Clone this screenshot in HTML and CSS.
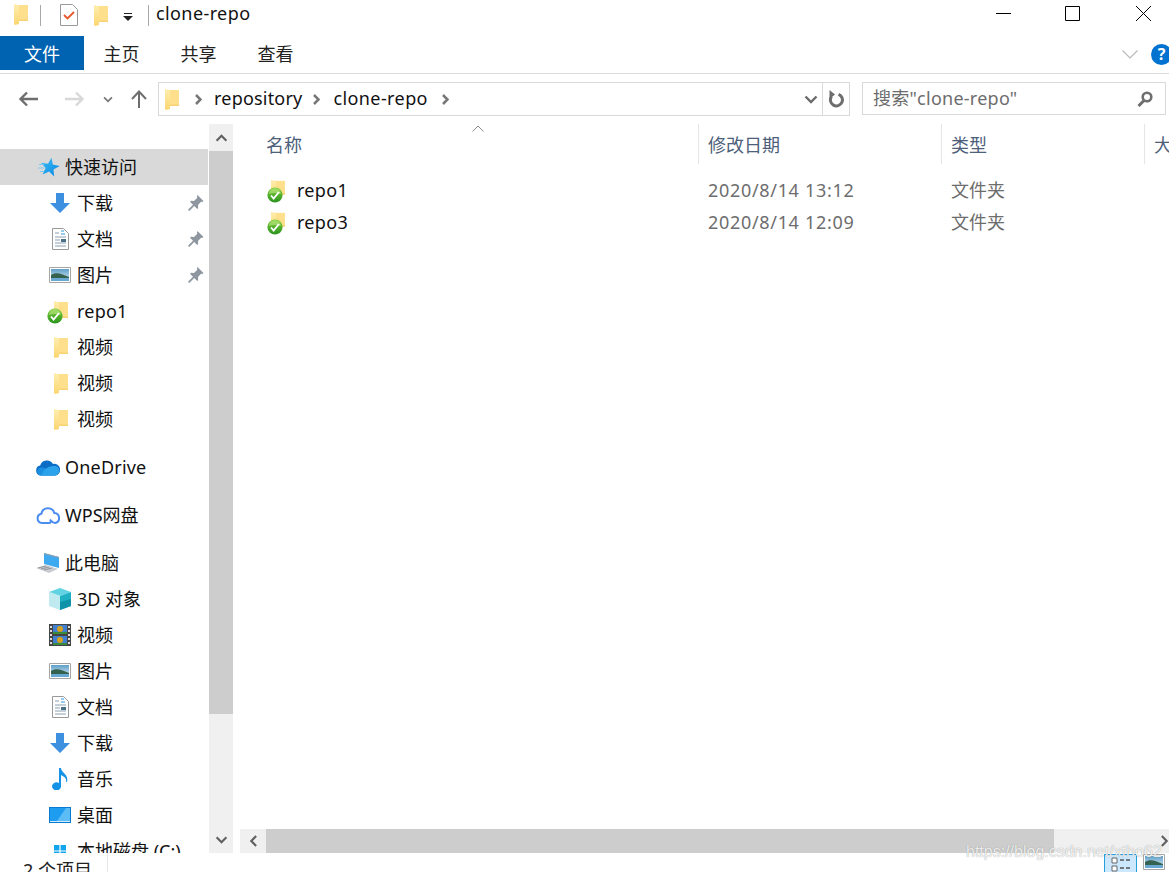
FILE: index.html
```html
<!DOCTYPE html>
<html lang="zh-CN">
<head>
<meta charset="utf-8">
<title>clone-repo</title>
<link rel="stylesheet" href="styles.css">
</head>
<body>
<svg class="defs" width="0" height="0" aria-hidden="true">
  <defs>
    <linearGradient id="fy" x1="0" y1="0" x2="0" y2="1"><stop offset="0" stop-color="#ffeeb0"/><stop offset="1" stop-color="#fbd670"/></linearGradient>
    <linearGradient id="gb" x1="0" y1="0" x2="0" y2="1"><stop offset="0" stop-color="#7ccb34"/><stop offset="1" stop-color="#2a9420"/></linearGradient>
    <linearGradient id="sky" x1="0" y1="0" x2="1" y2="1"><stop offset="0" stop-color="#3cc0f8"/><stop offset="1" stop-color="#0a84e0"/></linearGradient>
    <linearGradient id="picsky" x1="0" y1="0" x2="0" y2="1"><stop offset="0" stop-color="#5f9fc8"/><stop offset="1" stop-color="#dfeef6"/></linearGradient>
    <symbol id="folder" viewBox="0 0 14 21" preserveAspectRatio="none"><path d="M4 1h10v16H4z" fill="#fddf8c"/><path d="M0 0l5 1v19l-4 1H1L0 20z" fill="url(#fy)"/><path d="M5 15.500h9V17H5z" fill="#f7d274"/></symbol>
    <symbol id="badge" viewBox="0 0 16 16"><circle cx="8" cy="8" r="7.600" fill="url(#gb)"/><path d="M2 7a6 6 0 0 1 12 0a14 9 0 0 0-12 0z" fill="#b4e27e" opacity=".7"/><path d="M4 8.500l2.600 3L12 5" fill="none" stroke="#fff" stroke-width="1.900"/></symbol>
    <symbol id="pin" viewBox="0 0 16 16"><path d="M9.500 0l6 6-1.400 1-1-.3L10 10l.2 3-1 .9-3-3L1.300 16 0 14.700l5-4.900-3-3 1-1 3 .2 3.300-3.200-.4-1z" fill="#8e979f"/></symbol>
    <symbol id="down" viewBox="0 0 20 20"><path d="M6 0h8v10h6l-10 10L0 10h6z" fill="#3d8fe0"/></symbol>
    <symbol id="doc" viewBox="0 0 17 22"><path d="M.5.500h11l5 5v16H.500z" fill="#fff" stroke="#9a9a9a"/><path d="M3 5h4M3 9h11M3 12h5M3 15h11M3 18h11" stroke="#8aa0b5" stroke-width="1.200"/><path d="M9 3h3M9 6h4" stroke="#2f9ae0" stroke-width="1.200"/><path d="M9 11h5v3H9z" fill="#4a7088"/></symbol>
    <symbol id="pic" viewBox="0 0 22 16"><path d="M.5.500h21v15H.500z" fill="#fff" stroke="#a5a5a5"/><path d="M2 2h18v12H2z" fill="url(#picsky)"/><path d="M2 8c5-3 9-2 18 2v1H2z" fill="#35614f"/><path d="M2 11h18v3H2z" fill="#6aa8d4"/></symbol>
    <symbol id="cloud-fill" viewBox="0 0 24 16"><path d="M5 16a5 5 0 0 1-.8-9.900A7 7 0 0 1 17 4.500 5.500 5.500 0 0 1 19.500 16z" fill="#0a6cc4"/><path d="M5 16a4 4 0 0 1-1-7.800c4-.9 10 1.800 15 7.800z" fill="#1a8fe0"/><path d="M8 11c3-4 8-5 12-4.400 4 1.500 5 7 0 9.400H5z" fill="#2aa3ea"/></symbol>
    <symbol id="cloud-line" viewBox="0 0 24 18"><path d="M6 16.500a4.700 4.700 0 0 1-.6-9.300 6.700 6.700 0 0 1 13-.6 5 5 0 0 1 .6 9.900c-2 0-3-1-4-2.500" fill="none" stroke="#4a8cf0" stroke-width="2"/><path d="M6 16.500h7c1.500 0 2.500-2 1-3.500" fill="none" stroke="#4a8cf0" stroke-width="2"/></symbol>
    <symbol id="pc" viewBox="0 0 24 21"><path d="M8 0l15 4v11L8 11z" fill="#3fa9ef"/><path d="M8 0l15 4v1L8 1z" fill="#9a9fa6"/><path d="M0 15l10-3 12 4-9 4z" fill="#c9ccd0"/><path d="M2 15l8-2M5 16l8-2M8 17l8-2" stroke="#8f9499"/></symbol>
    <symbol id="cube" viewBox="0 0 22 22"><path d="M11 0l11 4-11 4L0 4z" fill="#62d3e3"/><path d="M0 4l11 4v14L0 18z" fill="#bfeaf0"/><path d="M22 4L11 8v14l11-4z" fill="#1fb0c4"/><path d="M11 14l11-3v7l-11 4z" fill="#0d92a8"/></symbol>
    <symbol id="film" viewBox="0 0 22 22"><path d="M0 0h22v22H0z" fill="#444"/><path d="M4 1h14v9H4z" fill="#3f7fd0"/><path d="M4 12h14v9H4z" fill="#3f7fd0"/><circle cx="11" cy="5" r="3" fill="#d6a11e"/><circle cx="11" cy="16" r="3" fill="#d6a11e"/><path d="M4 8h14v2H4zM4 19h14v2H4z" fill="#3b8a3a"/><path d="M1 2h2v2H1zM1 6h2v2H1zM1 10h2v2H1zM1 14h2v2H1zM1 18h2v2H1zM19 2h2v2h-2zM19 6h2v2h-2zM19 10h2v2h-2zM19 14h2v2h-2zM19 18h2v2h-2z" fill="#ddd"/></symbol>
    <symbol id="note" viewBox="0 0 17 22"><path d="M7 0h2c0 5 8 6 6 14h-1c1-3-1-5-5-7v11a4.500 4 0 1 1-2-3z" fill="#1492e6"/></symbol>
    <symbol id="desk" viewBox="0 0 22 16"><path d="M0 0h22v16H0z" fill="#0a7bd0"/><path d="M1 1h20v13H1z" fill="#1d9cf0"/><path d="M8 14l9-13h4v13z" fill="#5cbcf5"/><path d="M1 14.500h20" stroke="#cfe9fb"/></symbol>
    <symbol id="star" viewBox="0 0 24 21"><path d="M15.500.7L16.800 7.600 23.700 9.100 17.500 12.500 18.200 19.500 13.100 14.600 6.600 17.400 9.600 11.100 5 5.800 12 6.700z" fill="url(#sky)"/><path d="M3 7.500h5M2 11h6M4 14.500h4" stroke="#7cc8f5"/></symbol>
    <symbol id="chev" viewBox="0 0 14 9"><path d="M1.500 1.500L7 7l5.500-5.500" fill="none" stroke="currentColor" stroke-width="2.400"/></symbol>
    <symbol id="crumb" viewBox="0 0 7 11"><path d="M1 1l4.500 4.500L1 10" fill="none" stroke="#777" stroke-width="2.500"/></symbol>
  </defs>
</svg>

<div class="window">
  <header class="titlebar">
    <svg class="i-folder-q"><use href="#folder"/></svg>
    <span class="tb-sep tb-sep-a"></span>
    <svg class="i-check" viewBox="0 0 18 22"><path d="M.5.500h12l5 5v16H.500z" fill="#fff" stroke="#9a9a9a"/><path d="M4 11l3.500 3.500L14 8" fill="none" stroke="#e8562a" stroke-width="1.800"/></svg>
    <svg class="i-folder-w"><use href="#folder"/></svg>
    <svg class="i-qat" viewBox="0 0 10 8"><path d="M1 0h8v1H1z" fill="#222"/><path d="M0 3h10L5 8z" fill="#222"/></svg>
    <span class="tb-sep tb-sep-b"></span>
    <span class="title">clone-repo</span>
    <div class="winctl">
      <svg class="wc wc-min" viewBox="0 0 15 15"><path d="M0 7.500h15" stroke="#000"/></svg>
      <svg class="wc wc-max" viewBox="0 0 15 15"><path d="M.5.500h14v14H.500z" fill="none" stroke="#000"/></svg>
      <svg class="wc wc-close" viewBox="0 0 15 15"><path d="M0 0l15 15M15 0L0 15" stroke="#000"/></svg>
    </div>
  </header>

  <nav class="ribbon">
    <span class="tab tab-file">文件</span>
    <span class="tab">主页</span>
    <span class="tab">共享</span>
    <span class="tab">查看</span>
    <div class="ribbon-right">
      <svg class="rib-chev" viewBox="0 0 16 9"><path d="M.5.500L8 8 15.500.5" fill="none" stroke="#b9b9b9" stroke-width="1.200"/></svg>
      <span class="help">?</span>
    </div>
  </nav>

  <div class="addressbar">
    <svg class="nav-arrow arrow-back" viewBox="0 0 20 16"><path d="M20 8H3M9 1.500L2.500 8 9 14.500" fill="none" stroke="#6e6e6e" stroke-width="2.400"/></svg>
    <svg class="nav-arrow arrow-fwd" viewBox="0 0 20 16"><path d="M0 8h17M11 1.500L17.500 8 11 14.500" fill="none" stroke="#d8d8d8" stroke-width="2.400"/></svg>
    <svg class="recent"><use href="#chev"/></svg>
    <svg class="arrow-up" viewBox="0 0 16 18"><path d="M8 18V2M1 9l7-7.500L15 9" fill="none" stroke="#6e6e6e" stroke-width="2"/></svg>
    <div class="pathbox">
      <svg class="path-folder"><use href="#folder"/></svg>
      <svg class="crumb crumb-1"><use href="#crumb"/></svg>
      <span class="path-text">repository</span>
      <svg class="crumb crumb-2"><use href="#crumb"/></svg>
      <span class="path-text path-wide">clone-repo</span>
      <svg class="crumb crumb-3"><use href="#crumb"/></svg>
      <svg class="path-drop"><use href="#chev"/></svg>
      <span class="path-refresh">
        <svg class="refresh" viewBox="0 0 16 18"><path d="M10.500 4.300A6 6 0 1 1 3.500 6.500" fill="none" stroke="#6e6e6e" stroke-width="3"/><path d="M7.500 0L13 4.500 7.500 9z" fill="#6e6e6e" transform="translate(-6 0)"/></svg>
      </span>
    </div>
    <div class="searchbox">
      <span class="search-text">搜索"clone-repo"</span>
      <svg class="search-icon" viewBox="0 0 16 16"><circle cx="10" cy="6" r="4.300" fill="none" stroke="#6e6e6e" stroke-width="2.600"/><path d="M7 9.500L1.500 15" stroke="#6e6e6e" stroke-width="3"/></svg>
    </div>
  </div>

  <main class="main">
    <aside class="sidebar">
      <div class="tree">
        <section class="group">
          <div class="row top active"><svg class="ic"><use href="#star"/></svg><span class="label">快速访问</span></div>
          <div class="row"><span class="ic-box"><svg class="g-down"><use href="#down"/></svg></span><span class="label">下载</span><svg class="pin"><use href="#pin"/></svg></div>
          <div class="row"><span class="ic-box"><svg class="g-doc"><use href="#doc"/></svg></span><span class="label">文档</span><svg class="pin"><use href="#pin"/></svg></div>
          <div class="row"><span class="ic-box"><svg class="g-pic"><use href="#pic"/></svg></span><span class="label">图片</span><svg class="pin"><use href="#pin"/></svg></div>
          <div class="row"><span class="ic-box"><svg class="g-folder"><use href="#folder"/></svg><svg class="g-badge"><use href="#badge"/></svg></span><span class="latin">repo1</span></div>
          <div class="row"><span class="ic-box"><svg class="g-folder"><use href="#folder"/></svg></span><span class="label">视频</span></div>
          <div class="row"><span class="ic-box"><svg class="g-folder"><use href="#folder"/></svg></span><span class="label">视频</span></div>
          <div class="row"><span class="ic-box"><svg class="g-folder"><use href="#folder"/></svg></span><span class="label">视频</span></div>
        </section>
        <section class="group"><div class="row top"><svg class="ic"><use href="#cloud-fill"/></svg><span class="latin">OneDrive</span></div></section>
        <section class="group"><div class="row top"><svg class="ic"><use href="#cloud-line"/></svg><span class="label">WPS网盘</span></div></section>
        <section class="group">
          <div class="row top"><svg class="ic"><use href="#pc"/></svg><span class="label">此电脑</span></div>
          <div class="row"><span class="ic-box"><svg class="g-cube"><use href="#cube"/></svg></span><span class="label">3D 对象</span></div>
          <div class="row"><span class="ic-box"><svg class="g-cube"><use href="#film"/></svg></span><span class="label">视频</span></div>
          <div class="row"><span class="ic-box"><svg class="g-pic"><use href="#pic"/></svg></span><span class="label">图片</span></div>
          <div class="row"><span class="ic-box"><svg class="g-doc"><use href="#doc"/></svg></span><span class="label">文档</span></div>
          <div class="row"><span class="ic-box"><svg class="g-down"><use href="#down"/></svg></span><span class="label">下载</span></div>
          <div class="row"><span class="ic-box"><svg class="g-doc"><use href="#note"/></svg></span><span class="label">音乐</span></div>
          <div class="row"><span class="ic-box"><svg class="g-pic"><use href="#desk"/></svg></span><span class="label">桌面</span></div>
          <div class="row"><span class="ic-box"><svg class="g-win" viewBox="0 0 10 10"><path d="M0 0h4.500v4.500H0zM5.500 0H10v4.500H5.500zM0 5.500h4.500V10H0zM5.500 5.500H10V10H5.500z" fill="#12a5ee"/></svg></span><span class="label">本地磁盘 (C:)</span></div>
        </section>
      </div>
      <div class="vscroll">
        <span class="sb-btn sb-up"><svg class="sb-ic"><use href="#chev"/></svg></span>
        <span class="sb-thumb"></span>
        <span class="sb-track"></span>
        <span class="sb-btn sb-down"><svg class="sb-ic"><use href="#chev"/></svg></span>
      </div>
    </aside>

    <section class="content">
      <div class="columns cols-head">
        <div class="col col-name">名称<svg class="sort" viewBox="0 0 12 7"><path d="M.5 6.500L6 1l5.500 5.500" fill="none" stroke="#8a8a8a"/></svg></div>
        <div class="col">修改日期</div>
        <div class="col">类型</div>
        <div class="col">大小</div>
      </div>
      <div class="files">
        <div class="columns file">
          <div class="cell-name"><span class="file-ic"><svg class="f-folder"><use href="#folder"/></svg><svg class="f-badge"><use href="#badge"/></svg></span><span class="fname">repo1</span></div>
          <div class="cell cell-date">2020/8/14 13:12</div>
          <div class="cell">文件夹</div>
          <div class="cell"></div>
        </div>
        <div class="columns file">
          <div class="cell-name"><span class="file-ic"><svg class="f-folder"><use href="#folder"/></svg><svg class="f-badge"><use href="#badge"/></svg></span><span class="fname">repo3</span></div>
          <div class="cell cell-date">2020/8/14 12:09</div>
          <div class="cell">文件夹</div>
          <div class="cell"></div>
        </div>
      </div>
      <div class="hscroll">
        <span class="hb-btn"><svg class="hb-ic hb-left"><use href="#chev"/></svg></span>
        <span class="hb-thumb"></span>
        <span class="hb-track"></span>
        <span class="hb-end"><svg class="hb-ic hb-right"><use href="#chev"/></svg></span>
      </div>
    </section>
  </main>

  <footer class="status">
    <span class="count">2 个项目</span>
    <span class="status-sep"></span>
    <div class="views">
      <span class="view view-on"><svg class="v-list" viewBox="0 0 20 18"><path d="M1 1h5v5H1zM1 9h5v5H1z" fill="#fff" stroke="#666"/><path d="M9 3h4M15 3h4M9 11h4M15 11h4" stroke="#555" stroke-width="1.500"/></svg></span>
      <span class="view"><svg class="v-pic"><use href="#pic"/></svg></span>
    </div>
  </footer>

  <div class="watermark">https://blog.csdn.net/xtho62</div>
</div>
</body>
</html>
```

FILE: styles.css
```css
* { box-sizing: border-box; }
html, body { margin: 0; padding: 0; background: #fff; }
body { width: 1169px; height: 872px; overflow: hidden; }
.defs { position: absolute; }
svg { display: block; flex: none; }

.window {
  position: relative;
  width: 1169px;
  height: 872px;
  overflow: hidden;
  display: flex;
  flex-direction: column;
  font-family: "Noto Sans", "Noto Sans CJK SC", sans-serif;
  font-size: 18px;
  color: #111;
}

/* title bar */
.titlebar { height: 36px; display: flex; align-items: flex-start; padding-left: 14px; flex: none; }
.i-folder-q { width: 14px; height: 21px; margin-top: 4px; }
.tb-sep { width: 1px; height: 21px; background: #a8a8a8; margin-top: 5px; }
.tb-sep-a { margin-left: 12px; }
.i-check { width: 18px; height: 22px; margin: 4px 0 0 19px; }
.i-folder-w { width: 14px; height: 21px; margin: 5px 0 0 16px; }
.i-qat { width: 10px; height: 8px; margin: 13px 0 0 15px; }
.tb-sep-b { margin-left: 15px; }
.title { margin-left: 7px; line-height: 26px; letter-spacing: .4px; }
.winctl { margin-left: auto; display: flex; padding: 6px 18px 0 0; }
.wc { width: 15px; height: 15px; }
.wc-max { margin-left: 54px; }
.wc-close { margin-left: 56px; }

/* ribbon */
.ribbon { height: 38px; flex: none; display: flex; align-items: flex-start; border-bottom: 1px solid #dadada; }
.tab { width: 77px; height: 34px; line-height: 36px; text-align: center; color: #222; }
.tab-file { width: 83px; background: #0063b1; color: #fff; text-align: left; padding-left: 24px; box-shadow: 1px 0 0 #0063b1; }
.ribbon-right { margin-left: auto; display: flex; align-items: center; height: 34px; margin-top: 1px; margin-right: -3px; }
.rib-chev { width: 16px; height: 9px; margin-right: 13px; }
.help { width: 21px; height: 21px; border-radius: 50%; background: #0072d0; color: #fff; font-weight: 700; font-size: 16px; line-height: 21px; text-align: center; }

/* address bar */
.addressbar { height: 50px; flex: none; display: flex; align-items: flex-start; color: #111; }
.nav-arrow { width: 20px; height: 16px; margin-top: 17px; }
.arrow-back { margin-left: 18px; }
.arrow-fwd { margin-left: 27px; }
.recent { width: 10px; height: 7px; margin: 22px 0 0 18px; color: #777; }
.arrow-up { width: 16px; height: 18px; margin: 16px 0 0 18px; }
.pathbox {
  width: 692px; height: 34px; margin: 8px 0 0 11px;
  border: 1px solid #d9d9d9;
  display: flex; align-items: center;
  padding-left: 6px;
}
.path-folder { width: 14px; height: 21px; }
.crumb { width: 7px; height: 11px; }
.crumb-1 { margin: 0 12px 0 16px; }
.crumb-2 { margin: 0 13px 0 11px; }
.crumb-3 { margin-left: 14px; }
.path-text { line-height: 30px; height: 32px; white-space: nowrap; letter-spacing: .2px; }
.path-wide { letter-spacing: .4px; }
.path-drop { width: 14px; height: 9px; margin-left: auto; margin-right: 4px; color: #6b6b6b; }
.path-refresh { width: 27px; height: 32px; border-left: 1px solid #d9d9d9; display: flex; align-items: center; justify-content: center; }
.refresh { width: 16px; height: 18px; }
.searchbox {
  width: 304px; height: 33px; margin: 8px 0 0 12px;
  border: 1px solid #d9d9d9;
  display: flex; align-items: center;
  padding: 0 12px 0 10px;
  color: #6d6d6d;
}
.search-text { line-height: 31px; letter-spacing: .25px; }
.search-icon { width: 16px; height: 16px; margin-left: auto; }

/* main area */
.main { height: 729px; flex: none; display: flex; }
.sidebar { width: 234px; flex: none; display: flex; }
.tree { width: 209px; height: 729px; overflow: hidden; padding-top: 25px; display: flex; flex-direction: column; gap: 12px; flex: none; }
.row { height: 36px; flex: none; display: flex; align-items: center; padding-left: 48px; gap: 5px; white-space: nowrap; }
.row.top { padding-left: 36px; }
.row.active { background: #d9d9d9; margin-right: 1px; }
.label { padding-bottom: 2px; }
.latin { letter-spacing: .2px; }
.ic { width: 24px; height: 21px; }
.ic-box { width: 24px; height: 24px; display: flex; align-items: center; justify-content: center; position: relative; flex: none; }
.g-down { width: 20px; height: 20px; }
.g-doc { width: 17px; height: 22px; }
.g-pic { width: 22px; height: 16px; }
.g-folder { width: 14px; height: 21px; margin-left: 1px; }
.g-cube { width: 22px; height: 22px; }
.g-win { width: 12px; height: 12px; }
.g-badge { width: 16px; height: 16px; position: absolute; left: -1px; bottom: -1px; }
.pin { width: 16px; height: 16px; margin-left: auto; margin-right: 5px; }
.vscroll { width: 24px; flex: none; display: flex; flex-direction: column; background: #f0f0f0; }
.sb-btn { height: 27px; flex: none; display: flex; align-items: center; justify-content: center; background: #f0f0f0; color: #606060; }
.sb-ic { width: 13px; height: 8px; }
.sb-up .sb-ic { transform: rotate(180deg); }
.sb-thumb { height: 563px; flex: none; background: #cdcdcd; }
.sb-track { flex: 1; }

/* content */
.content { margin-left: 6px; width: 929px; flex: none; display: flex; flex-direction: column; }
.columns { display: grid; grid-template-columns: 458px 243px 203px 1fr; }
.cols-head { height: 41px; flex: none; color: #4c607a; overflow: hidden; }
.col { border-left: 1px solid #e5e5e5; padding-left: 9px; line-height: 43px; height: 40px; white-space: nowrap; position: relative; }
.col-name { border-left: 0; padding-left: 26px; }
.sort { position: absolute; left: 232px; top: 1px; width: 12px; height: 7px; }
.files { flex: 1; padding-top: 9px; }
.file { height: 32px; align-items: center; color: #6d6d6d; }
.cell { padding-left: 10px; line-height: 32px; white-space: nowrap; }
.cell-date { letter-spacing: .68px; }
.cell-name { display: flex; align-items: center; padding-left: 27px; color: #111; }
.file-ic { width: 20px; height: 24px; position: relative; flex: none; }
.f-folder { width: 14px; height: 18px; position: absolute; left: 4px; top: 2px; }
.f-badge { width: 16px; height: 16px; position: absolute; left: 0; top: 9px; }
.fname { margin-left: 10px; line-height: 32px; letter-spacing: .3px; }
.hscroll { height: 24px; flex: none; display: flex; background: #f0f0f0; }
.hb-btn { width: 26px; flex: none; display: flex; align-items: center; justify-content: center; color: #606060; }
.hb-ic { width: 13px; height: 8px; }
.hb-left { transform: rotate(90deg); }
.hb-right { transform: rotate(-90deg); }
.hb-thumb { width: 788px; flex: none; background: #cdcdcd; }
.hb-track { flex: 1; }
.hb-end { width: 10px; flex: none; display: flex; align-items: center; justify-content: center; color: #606060; }

/* status bar */
.status { height: 19px; flex: none; display: flex; align-items: flex-start; overflow: hidden; position: relative; }
.count { margin-left: 23px; line-height: 34px; white-space: nowrap; color: #222; }
.status-sep { width: 1px; height: 19px; background: #e8e8e8; margin-left: 15px; }
.views { margin-left: auto; display: flex; gap: 6px; padding: 1px 4px 0 0; }
.view { width: 22px; height: 24px; display: block; }
.view-on { width: 33px; background: #cce8ff; border: 1px solid #26a0da; padding: 2px 0 0 6px; }
.v-list { width: 20px; height: 18px; }
.v-pic { width: 22px; height: 16px; }

.watermark {
  position: absolute;
  left: 966px;
  top: 842px;
  font-family: "Liberation Sans", sans-serif;
  font-size: 16px;
  line-height: 20px;
  color: rgba(255, 255, 255, .85);
  text-shadow: 0 0 1px rgba(100, 100, 100, .7);
  white-space: nowrap;
}
```
